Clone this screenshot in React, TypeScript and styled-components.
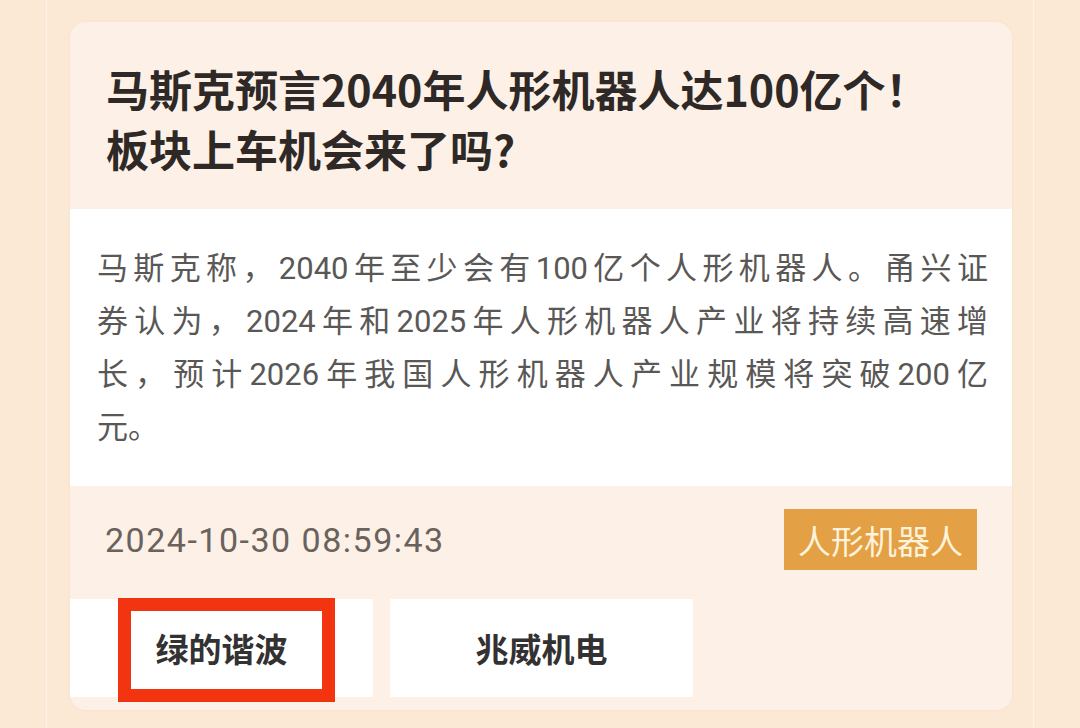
import styled, { createGlobalStyle } from "styled-components";

const GlobalStyle = createGlobalStyle`
  html, body {
    margin: 0;
    padding: 0;
    background: #fbe9d6;
  }
  body {
    font-family: Roboto, "Noto Sans CJK SC", sans-serif;
  }
`;

const Page = styled.div`
  width: 1080px;
  height: 728px;
  overflow: hidden;
  display: flex;
  justify-content: flex-start;
  background: #fbe9d6;
`;

const Column = styled.div`
  margin-left: 46px;
  width: 988px;
  height: 100%;
  border-left: 1px solid #fdf2e6;
  border-right: 1px solid #fdf2e6;
  padding: 22px 23px 0 23px;
  box-sizing: border-box;
`;

const Card = styled.div`
  width: 942px;
  border-radius: 16px;
  overflow: hidden;
  background: #fdf1e7;
  box-shadow: 0 0 3px rgba(240, 210, 180, 0.35);
`;

const TitleBlock = styled.div`
  padding: 36px 30px 30px 36px;
  height: 187px;
  box-sizing: border-box;
`;

const Title = styled.h1`
  margin: 0;
  font-family: "Noto Sans CJK SC", sans-serif;
  font-size: 43px;
  font-weight: 700;
  line-height: 60px;
  color: #2e2926;
`;

const Summary = styled.div`
  background: #ffffff;
  padding: 33px 24px 31px 27px;
  height: 277px;
  box-sizing: border-box;
  font-family: Roboto, "Noto Sans CJK SC", sans-serif;
  font-size: 31px;
  line-height: 53px;
  color: #5a5856;
`;

const SummaryLine = styled.div<{ $last?: boolean }>`
  white-space: nowrap;
  text-align: ${(p) => (p.$last ? "left" : "justify")};
  text-align-last: ${(p) => (p.$last ? "left" : "justify")};
`;

const Footer = styled.div`
  padding: 23px 0 13px 0;
  display: flex;
  flex-direction: column;
  gap: 29px;
`;

const MetaRow = styled.div`
  display: flex;
  align-items: center;
  justify-content: space-between;
  padding: 0 35px 0 35px;
  height: 61px;
`;

const Time = styled.span`
  font-family: Roboto, sans-serif;
  font-size: 34px;
  letter-spacing: 1.5px;
  color: #6a625c;
`;

const Tag = styled.span`
  height: 61px;
  display: flex;
  align-items: center;
  padding: 0 14px;
  background: #e3a044;
  color: #fdf2da;
  font-family: "Noto Sans CJK SC", sans-serif;
  font-size: 33px;
`;

const StockRow = styled.div`
  display: flex;
  gap: 17px;
`;

const Stock = styled.div`
  position: relative;
  width: 303px;
  height: 98px;
  background: #ffffff;
  display: flex;
  align-items: center;
  justify-content: center;
  font-family: "Noto Sans CJK SC", sans-serif;
  font-size: 33px;
  font-weight: 600;
  color: #333131;
`;

const Highlight = styled.div`
  position: absolute;
  left: 48px;
  top: -1px;
  width: 217px;
  height: 104px;
  border: 13px solid #f23411;
  box-sizing: border-box;
  pointer-events: none;
`;

const lines = [
  "马斯克称，2040年至少会有100亿个人形机器人。甬兴证",
  "券认为，2024年和2025年人形机器人产业将持续高速增",
  "长，预计2026年我国人形机器人产业规模将突破200亿",
  "元。",
];

export default function App() {
  return (
    <>
      <GlobalStyle />
      <Page>
        <Column>
          <Card>
            <TitleBlock>
              <Title>
                马斯克预言2040年人形机器人达100亿个！
                <br />
                板块上车机会来了吗?
              </Title>
            </TitleBlock>
            <Summary>
              {lines.map((l, i) => (
                <SummaryLine key={i} $last={i === lines.length - 1}>
                  {l}
                </SummaryLine>
              ))}
            </Summary>
            <Footer>
              <MetaRow>
                <Time>2024-10-30 08:59:43</Time>
                <Tag>人形机器人</Tag>
              </MetaRow>
              <StockRow>
                <Stock>
                  绿的谐波
                  <Highlight />
                </Stock>
                <Stock>兆威机电</Stock>
              </StockRow>
            </Footer>
          </Card>
        </Column>
      </Page>
    </>
  );
}
